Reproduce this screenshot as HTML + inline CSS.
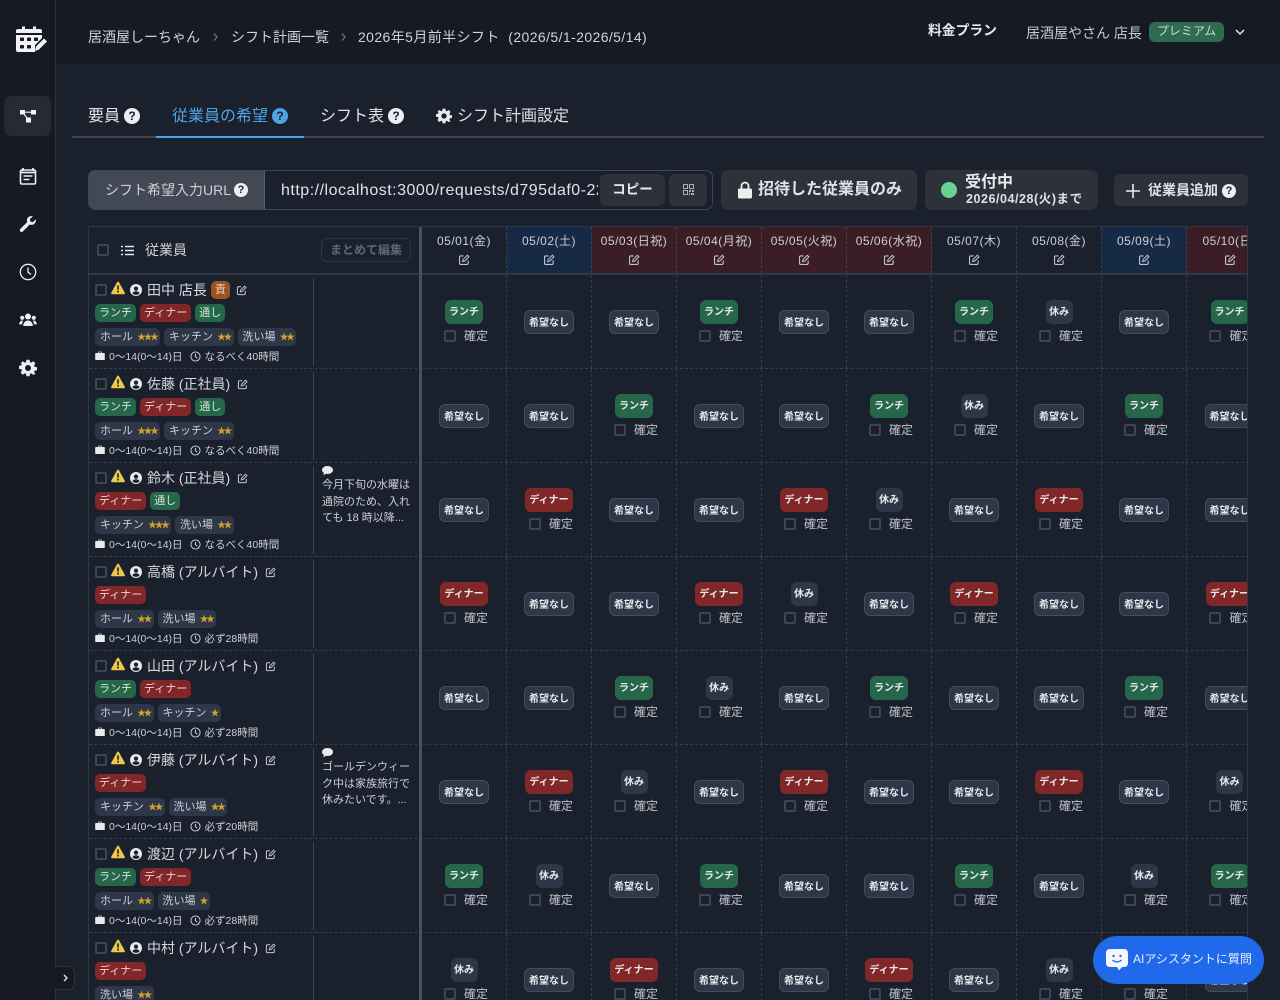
<!DOCTYPE html>
<html lang="ja"><head><meta charset="utf-8"><title>シフト</title>
<style>
*{box-sizing:border-box;margin:0;padding:0}
html,body{width:1280px;height:1000px;overflow:hidden;background:#1a202c}
body{font-family:"Liberation Sans","Noto Sans CJK JP",sans-serif;color:#e2e8f0;position:relative}
.a{position:absolute;white-space:nowrap}
svg{display:block}
.h{display:inline-block;width:16px;height:16px;border-radius:50%;background:#edeef0;color:#1a202c;font-size:12px;font-weight:700;line-height:16px;text-align:center}
.h.s{width:14px;height:14px;font-size:11px;line-height:14px}
#tb{position:absolute;left:88px;top:226px;width:1160px;height:774px;overflow:hidden;border-left:1px solid #2d3748;border-top:1px solid #2d3748;border-right:1px solid #2d3748}
.dh{position:absolute;top:0;width:85px;height:46px;text-align:center;font-size:12px;letter-spacing:.5px;color:#cbd0d8;padding-top:6px;border-right:1px dashed #3a4356;line-height:16px;white-space:nowrap}
.dh svg{margin:5px auto 0}
.sat{background:#172a45}.hol{background:#3b1d25}
.r{position:absolute;left:0;width:1160px;height:94px;border-bottom:1px dashed #343d50}
.n{position:absolute;left:6px;top:7px;height:16px;display:flex;align-items:center;font-size:14px;color:#d5d9df;white-space:nowrap}
.cb{display:inline-block;width:12px;height:12px;border:2px solid #3d4453;border-radius:2px;flex:none}
.t{position:absolute;left:6px;top:29px;display:flex;gap:4px}
.t span,.k span{display:block;height:18px;line-height:18px;border-radius:5px;padding:0 4px;font-size:11px;white-space:nowrap}
.gn{background:#276749;color:#d5e6dc}.rd{background:#822727;color:#eed5d5}
.k{position:absolute;left:6px;top:53px;display:flex;gap:4px}
.k span{background:#2d3748;color:#cbd0d8;padding:0 3.5px 0 5px}
.k i{font-style:normal;color:#d69e2e;font-size:9px;letter-spacing:-2.5px;margin-left:4px;font-family:"Noto Sans CJK JP",sans-serif}
.m{position:absolute;left:6px;top:74px;height:14px;display:flex;align-items:center;font-size:10.5px;color:#cbd0d8;white-space:nowrap}
.v{position:absolute;left:224px;top:3px;width:1px;height:88px;background:#3f4757}
.cm{position:absolute;left:233px;top:3px;width:94px;font-size:11px;line-height:16.5px;color:#cbd0d8}
.cm svg{margin-bottom:1px}
.c{position:absolute;top:0;width:85px;height:93px;padding-top:1px;border-right:1px dashed #343d50;display:flex;flex-direction:column;align-items:center;justify-content:center}
.b{display:block;height:24px;line-height:26px;border-radius:6px;font-size:10px;font-weight:700;text-align:center;white-space:nowrap;color:#e6e9ee}
.L{width:38px;background:#276749}.D{width:48px;background:#822727}.Y{width:27px;background:#2d3748}
.N{width:50px;background:#2d3748;border:1px solid #434c5f;line-height:25px}
.q{display:flex;align-items:center;margin-top:5px;margin-bottom:2px;height:14px;font-size:12px;color:#bfc4cc;margin-left:4px}
.q .cb{margin-right:8px}
.nav{position:absolute;left:19px;width:18px;height:18px}
</style></head><body>
<svg width="0" height="0" style="position:absolute"><defs>
<symbol id="e" viewBox="0 0 14 14"><path d="M6.500 2.200H3.200C2.300 2.200 1.800 2.700 1.800 3.600v7.200c0 .9.5 1.400 1.400 1.400h7.200c.9 0 1.400-.5 1.400-1.400V7.500" fill="none" stroke="currentColor" stroke-width="1.300"/><path d="M5.400 8.800l.5-2.300 5-5 1.800 1.800-5 5z" fill="none" stroke="currentColor" stroke-width="1.200"/></symbol>
<symbol id="w" viewBox="0 0 14 14"><path d="M7 .6c.4 0 .7.2.9.5l5.900 10.600c.4.700-.1 1.500-.9 1.500H1.100c-.8 0-1.300-.8-.9-1.500L6.100 1.100C6.300.8 6.600.6 7 .6z" fill="#ecc94b"/><rect x="6.200" y="4.200" width="1.600" height="4.600" rx=".6" fill="#1a202c"/><circle cx="7" cy="10.600" r="1" fill="#1a202c"/></symbol>
<symbol id="u" viewBox="0 0 12 12"><circle cx="6" cy="6" r="6" fill="#e8eaed"/><circle cx="6" cy="4.600" r="2.100" fill="#1a202c"/><path d="M2.400 9.400c.6-1.500 2-2.100 3.600-2.100s3 .6 3.600 2.100C8.600 10.400 7.400 10.900 6 10.900S3.400 10.400 2.400 9.400z" fill="#1a202c"/></symbol>
<symbol id="bc" viewBox="0 0 10 10"><path d="M3.300 2V1.200c0-.4.2-.6.600-.6h2.200c.4 0 .6.200.6.600V2H9c.5 0 .8.300.8.800v5.400c0 .5-.3.800-.8.800H1c-.5 0-.8-.3-.8-.8V2.800c0-.5.3-.8.800-.8zM4 2h2V1.300H4z" fill="#e8eaed" fill-rule="evenodd"/></symbol>
<symbol id="cl" viewBox="0 0 12 12"><circle cx="6" cy="6" r="5" fill="none" stroke="#d5d9df" stroke-width="1"/><path d="M6 3v3.200l2 1.800" fill="none" stroke="#d5d9df" stroke-width="1"/></symbol>
<symbol id="g" viewBox="0 0 24 24"><path fill="currentColor" fill-rule="evenodd" d="M10 1h4l.6 3.100 1.700.7L19 3l2.900 2.900-1.800 2.700.7 1.700 3.200.7v4l-3.200.6-.7 1.700 1.800 2.700L19 21l-2.700-1.800-1.700.7L14 23h-4l-.6-3.100-1.700-.7L5 21l-2.900-2.900 1.800-2.700-.7-1.700L0 13.100v-4l3.200-.7.700-1.700L2.100 5.900 5 3l2.700 1.800 1.700-.7zM12 8a4 4 0 1 0 0 8 4 4 0 0 0 0-8z"/></symbol>
</defs></svg>

<!-- sidebar -->
<div class="a" style="left:0;top:0;width:56px;height:1000px;background:#171a23;border-right:1px solid #2d3342"></div>
<svg class="a" style="left:15px;top:25px" width="33" height="29" viewBox="0 0 33 29"><path d="M1 8V6c0-1.200.8-2 2-2h4V1.500h3V4h8V1.500h3V4h4c1.200 0 2 .8 2 2v2z" fill="#f2f3f4"/><path d="M1 10h26v3l-7 7v7H3c-1.200 0-2-.8-2-2z" fill="#f2f3f4"/><g fill="#171a23"><rect x="5" y="12.500" width="4" height="3.500" rx=".8"/><rect x="12" y="12.500" width="4" height="3.500" rx=".8"/><rect x="19" y="12.500" width="4" height="3.500" rx=".8"/><rect x="5" y="20" width="4" height="3.500" rx=".8"/><rect x="12" y="20" width="4" height="3.500" rx=".8"/></g><path d="M20 26l1-4.500L29 13.500l3 3-8 8z" fill="#f2f3f4"/></svg>
<div class="a" style="left:4px;top:96px;width:47px;height:40px;border-radius:7px;background:#262a33"></div>
<svg class="a" style="left:20px;top:109px" width="16" height="14" viewBox="0 0 16 14"><g fill="#f2f3f4"><rect x="0" y="1" width="5" height="4.500"/><rect x="11" y="1" width="5" height="4.500"/><rect x="6" y="8.500" width="5" height="5"/></g><path d="M4 3.200h8M3.500 4.500L8 10" stroke="#f2f3f4" stroke-width="1.200"/></svg>
<svg class="nav" style="top:167px" viewBox="0 0 18 18"><path d="M3 3h12c1 0 1.500.5 1.500 1.500v11c0 1-.5 1.500-1.500 1.500H3c-1 0-1.500-.5-1.500-1.500v-11C1.500 3.500 2 3 3 3z" fill="none" stroke="#eceef0" stroke-width="1.600"/><path d="M4 1v3M14 1v3M1.500 5.500h15" stroke="#eceef0" stroke-width="1.800"/><path d="M4.500 9h9M4.500 12.500h6" stroke="#eceef0" stroke-width="1.600"/></svg>
<svg class="nav" style="top:215px" viewBox="0 0 18 18"><path d="M16.800 4.200l-3 3-2.400-.6-.6-2.400 3-3C11.500.8 9 1.600 8.200 3.800c-.4 1.100-.3 2.200.1 3.200L1.400 13.900c-.8.800-.8 1.900-.1 2.600s1.900.7 2.600-.1L10.800 9.500c1 .4 2.100.5 3.200.1 2.200-.8 3.200-3.200 2.800-5.400z" fill="#eceef0"/></svg>
<svg class="nav" style="top:263px" viewBox="0 0 18 18"><circle cx="9" cy="9" r="7.700" fill="none" stroke="#eceef0" stroke-width="1.300"/><path d="M9 4.500V9.200l3 2.300" fill="none" stroke="#eceef0" stroke-width="1.300"/></svg>
<svg class="nav" style="top:311px" viewBox="0 0 18 18"><g fill="#eceef0"><circle cx="9" cy="5.500" r="3"/><circle cx="3.200" cy="6.800" r="2.100"/><circle cx="14.800" cy="6.800" r="2.100"/><path d="M4.200 15c0-3.300 2.100-5.500 4.800-5.500s4.800 2.200 4.800 5.500z"/><path d="M.2 13.400c0-2.300 1.300-3.900 3.200-3.900.5 0 .8.100.8.100-.6.900-1 2.100-1.100 3.800zM17.800 13.400c0-2.300-1.300-3.900-3.200-3.900-.5 0-.8.100-.8.100.6.900 1 2.100 1.100 3.800z"/></g></svg>
<svg class="nav" style="top:359px;color:#eceef0" viewBox="0 0 24 24"><use href="#g"/></svg>
<div class="a" style="left:55px;top:966px;width:20px;height:24px;background:#171a23;border:1px solid #2d3342;border-left:0;border-radius:0 6px 6px 0"></div>
<svg class="a" style="left:62px;top:974px" width="7" height="8" viewBox="0 0 7 8"><path d="M2 1l3 3-3 3" fill="none" stroke="#e2e8f0" stroke-width="1.400"/></svg>

<!-- header -->
<div class="a" style="left:56px;top:0;width:1224px;height:64px;background:#171a23"></div>
<div class="a" style="left:88px;top:28px;font-size:14px;line-height:18px;color:#cfd3d9">居酒屋しーちゃん</div>
<svg class="a" style="left:213px;top:33px" width="5" height="8" viewBox="0 0 5 8"><path d="M1 .5l3 3.500-3 3.500" fill="none" stroke="#737a87" stroke-width="1.100"/></svg>
<div class="a" style="left:231px;top:28px;font-size:14px;line-height:18px;color:#cfd3d9">シフト計画一覧</div>
<svg class="a" style="left:341px;top:33px" width="5" height="8" viewBox="0 0 5 8"><path d="M1 .5l3 3.500-3 3.500" fill="none" stroke="#737a87" stroke-width="1.100"/></svg>
<div class="a" style="left:358px;top:28px;font-size:14px;line-height:18px;color:#cfd3d9;letter-spacing:.4px">2026年5月前半シフト&nbsp; (2026/5/1-2026/5/14)</div>
<div class="a" style="left:928px;top:22px;font-size:13.800px;line-height:18px;font-weight:700;color:#e8eaed">料金プラン</div>
<div class="a" style="left:1026px;top:24px;font-size:14px;line-height:18px;color:#c5c9d0">居酒屋やさん 店長</div>
<div class="a" style="left:1149px;top:22px;width:75px;height:20px;border-radius:6px;background:#2f6b4f;font-size:12px;line-height:19px;text-align:center;color:#c6dccf">プレミアム</div>
<svg class="a" style="left:1235px;top:29px" width="10" height="7" viewBox="0 0 10 7"><path d="M1 1l4 4 4-4" fill="none" stroke="#e2e8f0" stroke-width="1.500"/></svg>

<!-- tabs -->
<div class="a" style="left:72px;top:136px;width:1192px;height:2px;background:#3f444e"></div>
<div class="a" style="left:156px;top:136px;width:148px;height:2px;background:#4fa3e3"></div>
<div class="a" style="left:88px;top:106px;font-size:16px;line-height:22px;color:#dfe2e6">要員</div>
<span class="h a" style="left:124px;top:108px">?</span>
<div class="a" style="left:172px;top:106px;font-size:16px;line-height:22px;color:#4fa3e3">従業員の希望</div>
<span class="h a" style="left:272px;top:108px;background:#4fa3e3">?</span>
<div class="a" style="left:320px;top:106px;font-size:16px;line-height:22px;color:#dfe2e6">シフト表</div>
<span class="h a" style="left:388px;top:108px">?</span>
<svg class="a" style="left:436px;top:108px;color:#e8eaed" width="16" height="16" viewBox="0 0 24 24"><use href="#g"/></svg>
<div class="a" style="left:457px;top:106px;font-size:16px;line-height:22px;color:#dfe2e6">シフト計画設定</div>

<!-- toolbar -->
<div class="a" style="left:88px;top:170px;width:625px;height:40px;border:1px solid #3f4552;border-radius:7px;overflow:hidden;background:#1a202c">
<div class="a" style="left:0;top:0;width:176px;height:38px;background:#424854;border-right:1px solid #5a606c"></div>
<div class="a" style="left:16px;top:10px;font-size:14px;line-height:18px;color:#cfd3d9">シフト希望入力URL</div>
<span class="h s a" style="left:145px;top:12px">?</span>
<div class="a" style="left:192px;top:10px;width:317px;overflow:hidden;font-size:16px;line-height:20px;color:#dfe2e6;letter-spacing:.5px">http://localhost:3000/requests/d795daf0-22c4-4f</div>
<div class="a" style="left:511px;top:3px;width:65px;height:32px;background:#2d3139;border-radius:6px;font-size:13.500px;font-weight:700;line-height:32px;text-align:center;color:#e8eaed">コピー</div>
<div class="a" style="left:580px;top:3px;width:38px;height:32px;background:#2d3139;border-radius:6px"></div>
<svg class="a" style="left:594px;top:13px" width="11" height="11" viewBox="0 0 11 11"><g fill="none" stroke="#a8adb6" stroke-width="1"><rect x=".5" y=".5" width="4" height="4"/><rect x="6.500" y=".5" width="4" height="4"/><rect x=".5" y="6.500" width="4" height="4"/></g><path d="M6 6h2v2H6zM9 6h2v2H9zM8 9h3v2H8zM6 9h1v2H6z" fill="#a8adb6"/></svg>
</div>
<div class="a" style="left:721px;top:170px;width:196px;height:40px;background:#2d3139;border-radius:7px"></div>
<svg class="a" style="left:738px;top:181px" width="14" height="18" viewBox="0 0 14 18"><path d="M3.500 8V5a3.500 3.500 0 0 1 7 0v3" fill="none" stroke="#eceef0" stroke-width="1.800"/><rect x="0" y="7.500" width="14" height="10" rx="1.500" fill="#eceef0"/></svg>
<div class="a" style="left:758px;top:180px;font-size:16px;line-height:20px;font-weight:700;color:#dfe2e6">招待した従業員のみ</div>
<div class="a" style="left:925px;top:170px;width:173px;height:40px;background:#2d3139;border-radius:7px"></div>
<div class="a" style="left:941px;top:182px;width:16px;height:16px;border-radius:50%;background:#68d391"></div>
<div class="a" style="left:965px;top:173px;font-size:16px;line-height:20px;font-weight:700;color:#e8eaed">受付中</div>
<div class="a" style="left:966px;top:192px;font-size:12.500px;line-height:15px;font-weight:700;letter-spacing:.55px;color:#dfe2e6">2026/04/28(火)まで</div>
<div class="a" style="left:1114px;top:174px;width:134px;height:32px;background:#2d3139;border-radius:6px"></div>
<svg class="a" style="left:1126px;top:184px" width="14" height="14" viewBox="0 0 14 14"><path d="M7 0v14M0 7h14" stroke="#eceef0" stroke-width="1.600"/></svg>
<div class="a" style="left:1148px;top:181px;font-size:14px;line-height:18px;font-weight:700;color:#dfe2e6">従業員追加</div>
<span class="h s a" style="left:1222px;top:184px">?</span>

<!-- table -->
<div id="tb">
<div class="a" style="left:0;top:46px;width:1160px;height:2px;background:#2d3748"></div>
<span class="cb a" style="left:8px;top:17px"></span>
<svg class="a" style="left:32px;top:18px" width="13" height="11" viewBox="0 0 13 11"><path d="M4 1.500h9M4 5.500h9M4 9.500h9" stroke="#e2e8f0" stroke-width="1.500"/><path d="M0 .7h2v1.600H0zM0 4.700h2v1.600H0zM0 8.700h2v1.600H0z" fill="#e2e8f0"/></svg>
<div class="a" style="left:56px;top:14px;font-size:14px;line-height:19px;color:#cfd3d9">従業員</div>
<div class="a" style="left:232px;top:11px;width:90px;height:24px;border:1px solid #2d3342;border-radius:6px;font-size:12px;font-weight:700;line-height:22px;text-align:center;color:#5f6571">まとめて編集</div>

<div class="dh" style="left:333px">05/01(金)<svg width="12" height="12" style="color:#bfc4cc"><use href="#e"/></svg></div>
<div class="dh sat" style="left:418px">05/02(土)<svg width="12" height="12" style="color:#bfc4cc"><use href="#e"/></svg></div>
<div class="dh hol" style="left:503px">05/03(日祝)<svg width="12" height="12" style="color:#bfc4cc"><use href="#e"/></svg></div>
<div class="dh hol" style="left:588px">05/04(月祝)<svg width="12" height="12" style="color:#bfc4cc"><use href="#e"/></svg></div>
<div class="dh hol" style="left:673px">05/05(火祝)<svg width="12" height="12" style="color:#bfc4cc"><use href="#e"/></svg></div>
<div class="dh hol" style="left:758px">05/06(水祝)<svg width="12" height="12" style="color:#bfc4cc"><use href="#e"/></svg></div>
<div class="dh" style="left:843px">05/07(木)<svg width="12" height="12" style="color:#bfc4cc"><use href="#e"/></svg></div>
<div class="dh" style="left:928px">05/08(金)<svg width="12" height="12" style="color:#bfc4cc"><use href="#e"/></svg></div>
<div class="dh sat" style="left:1013px">05/09(土)<svg width="12" height="12" style="color:#bfc4cc"><use href="#e"/></svg></div>
<div class="dh hol" style="left:1098px;border-right:0;width:85px">05/10(日)<svg width="12" height="12" style="color:#bfc4cc"><use href="#e"/></svg></div>

<div class="r" style="top:48px"><div class="n"><span class="cb"></span><svg width="14" height="14" style="margin:-4px 0 0 4px"><use href="#w"/></svg><svg width="12" height="12" style="margin:0 5px 0 5px"><use href="#u"/></svg>田中 店長<span style="width:19px;height:18px;border-radius:5px;background:#9c5221;font-size:11px;line-height:18px;text-align:center;margin-left:4px;color:#e8cdb8">責</span><svg width="11" height="11" style="margin-left:6.5px;color:#c5c9d0"><use href="#e"/></svg></div>
<div class="t"><span class="gn">ランチ</span><span class="rd">ディナー</span><span class="gn">通し</span></div>
<div class="k"><span>ホール<i>★★★</i></span><span>キッチン<i>★★</i></span><span>洗い場<i>★★</i></span></div>
<div class="m"><svg width="10" height="10"><use href="#bc"/></svg><span style="margin:0 7px 0 4px">0〜14(0〜14)日</span><svg width="11" height="11"><use href="#cl"/></svg><span style="margin-left:4px">なるべく40時間</span></div><div class="v"></div>
<div class="c" style="left:333px"><b class="b L">ランチ</b><div class="q"><span class="cb"></span>確定</div></div>
<div class="c" style="left:418px"><b class="b N">希望なし</b></div>
<div class="c" style="left:503px"><b class="b N">希望なし</b></div>
<div class="c" style="left:588px"><b class="b L">ランチ</b><div class="q"><span class="cb"></span>確定</div></div>
<div class="c" style="left:673px"><b class="b N">希望なし</b></div>
<div class="c" style="left:758px"><b class="b N">希望なし</b></div>
<div class="c" style="left:843px"><b class="b L">ランチ</b><div class="q"><span class="cb"></span>確定</div></div>
<div class="c" style="left:928px"><b class="b Y">休み</b><div class="q"><span class="cb"></span>確定</div></div>
<div class="c" style="left:1013px"><b class="b N">希望なし</b></div>
<div class="c" style="left:1098px;border:0"><b class="b L">ランチ</b><div class="q"><span class="cb"></span>確定</div></div></div>

<div class="r" style="top:142px"><div class="n"><span class="cb"></span><svg width="14" height="14" style="margin:-4px 0 0 4px"><use href="#w"/></svg><svg width="12" height="12" style="margin:0 5px 0 5px"><use href="#u"/></svg>佐藤 (正社員)<svg width="11" height="11" style="margin-left:6.5px;color:#c5c9d0"><use href="#e"/></svg></div>
<div class="t"><span class="gn">ランチ</span><span class="rd">ディナー</span><span class="gn">通し</span></div>
<div class="k"><span>ホール<i>★★★</i></span><span>キッチン<i>★★</i></span></div>
<div class="m"><svg width="10" height="10"><use href="#bc"/></svg><span style="margin:0 7px 0 4px">0〜14(0〜14)日</span><svg width="11" height="11"><use href="#cl"/></svg><span style="margin-left:4px">なるべく40時間</span></div><div class="v"></div>
<div class="c" style="left:333px"><b class="b N">希望なし</b></div>
<div class="c" style="left:418px"><b class="b N">希望なし</b></div>
<div class="c" style="left:503px"><b class="b L">ランチ</b><div class="q"><span class="cb"></span>確定</div></div>
<div class="c" style="left:588px"><b class="b N">希望なし</b></div>
<div class="c" style="left:673px"><b class="b N">希望なし</b></div>
<div class="c" style="left:758px"><b class="b L">ランチ</b><div class="q"><span class="cb"></span>確定</div></div>
<div class="c" style="left:843px"><b class="b Y">休み</b><div class="q"><span class="cb"></span>確定</div></div>
<div class="c" style="left:928px"><b class="b N">希望なし</b></div>
<div class="c" style="left:1013px"><b class="b L">ランチ</b><div class="q"><span class="cb"></span>確定</div></div>
<div class="c" style="left:1098px;border:0"><b class="b N">希望なし</b></div></div>

<div class="r" style="top:236px"><div class="n"><span class="cb"></span><svg width="14" height="14" style="margin:-4px 0 0 4px"><use href="#w"/></svg><svg width="12" height="12" style="margin:0 5px 0 5px"><use href="#u"/></svg>鈴木 (正社員)<svg width="11" height="11" style="margin-left:6.5px;color:#c5c9d0"><use href="#e"/></svg></div>
<div class="t"><span class="rd">ディナー</span><span class="gn">通し</span></div>
<div class="k"><span>キッチン<i>★★★</i></span><span>洗い場<i>★★</i></span></div>
<div class="m"><svg width="10" height="10"><use href="#bc"/></svg><span style="margin:0 7px 0 4px">0〜14(0〜14)日</span><svg width="11" height="11"><use href="#cl"/></svg><span style="margin-left:4px">なるべく40時間</span></div><div class="v"></div>
<div class="cm"><svg width="11" height="10" viewBox="0 0 11 10"><path d="M5.500 0C8.500 0 11 1.700 11 4s-2.500 4-5.500 4c-.6 0-1.200-.1-1.700-.2L1.500 9.500l.4-2.600C.7 6.200 0 5.200 0 4 0 1.700 2.500 0 5.500 0z" fill="#e8eaed"/></svg>今月下旬の水曜は<br>通院のため、入れ<br>ても 18 時以降...</div>
<div class="c" style="left:333px"><b class="b N">希望なし</b></div>
<div class="c" style="left:418px"><b class="b D">ディナー</b><div class="q"><span class="cb"></span>確定</div></div>
<div class="c" style="left:503px"><b class="b N">希望なし</b></div>
<div class="c" style="left:588px"><b class="b N">希望なし</b></div>
<div class="c" style="left:673px"><b class="b D">ディナー</b><div class="q"><span class="cb"></span>確定</div></div>
<div class="c" style="left:758px"><b class="b Y">休み</b><div class="q"><span class="cb"></span>確定</div></div>
<div class="c" style="left:843px"><b class="b N">希望なし</b></div>
<div class="c" style="left:928px"><b class="b D">ディナー</b><div class="q"><span class="cb"></span>確定</div></div>
<div class="c" style="left:1013px"><b class="b N">希望なし</b></div>
<div class="c" style="left:1098px;border:0"><b class="b N">希望なし</b></div></div>

<div class="r" style="top:330px"><div class="n"><span class="cb"></span><svg width="14" height="14" style="margin:-4px 0 0 4px"><use href="#w"/></svg><svg width="12" height="12" style="margin:0 5px 0 5px"><use href="#u"/></svg>高橋 (アルバイト)<svg width="11" height="11" style="margin-left:6.5px;color:#c5c9d0"><use href="#e"/></svg></div>
<div class="t"><span class="rd">ディナー</span></div>
<div class="k"><span>ホール<i>★★</i></span><span>洗い場<i>★★</i></span></div>
<div class="m"><svg width="10" height="10"><use href="#bc"/></svg><span style="margin:0 7px 0 4px">0〜14(0〜14)日</span><svg width="11" height="11"><use href="#cl"/></svg><span style="margin-left:4px">必ず28時間</span></div><div class="v"></div>
<div class="c" style="left:333px"><b class="b D">ディナー</b><div class="q"><span class="cb"></span>確定</div></div>
<div class="c" style="left:418px"><b class="b N">希望なし</b></div>
<div class="c" style="left:503px"><b class="b N">希望なし</b></div>
<div class="c" style="left:588px"><b class="b D">ディナー</b><div class="q"><span class="cb"></span>確定</div></div>
<div class="c" style="left:673px"><b class="b Y">休み</b><div class="q"><span class="cb"></span>確定</div></div>
<div class="c" style="left:758px"><b class="b N">希望なし</b></div>
<div class="c" style="left:843px"><b class="b D">ディナー</b><div class="q"><span class="cb"></span>確定</div></div>
<div class="c" style="left:928px"><b class="b N">希望なし</b></div>
<div class="c" style="left:1013px"><b class="b N">希望なし</b></div>
<div class="c" style="left:1098px;border:0"><b class="b D">ディナー</b><div class="q"><span class="cb"></span>確定</div></div></div>

<div class="r" style="top:424px"><div class="n"><span class="cb"></span><svg width="14" height="14" style="margin:-4px 0 0 4px"><use href="#w"/></svg><svg width="12" height="12" style="margin:0 5px 0 5px"><use href="#u"/></svg>山田 (アルバイト)<svg width="11" height="11" style="margin-left:6.5px;color:#c5c9d0"><use href="#e"/></svg></div>
<div class="t"><span class="gn">ランチ</span><span class="rd">ディナー</span></div>
<div class="k"><span>ホール<i>★★</i></span><span>キッチン<i>★</i></span></div>
<div class="m"><svg width="10" height="10"><use href="#bc"/></svg><span style="margin:0 7px 0 4px">0〜14(0〜14)日</span><svg width="11" height="11"><use href="#cl"/></svg><span style="margin-left:4px">必ず28時間</span></div><div class="v"></div>
<div class="c" style="left:333px"><b class="b N">希望なし</b></div>
<div class="c" style="left:418px"><b class="b N">希望なし</b></div>
<div class="c" style="left:503px"><b class="b L">ランチ</b><div class="q"><span class="cb"></span>確定</div></div>
<div class="c" style="left:588px"><b class="b Y">休み</b><div class="q"><span class="cb"></span>確定</div></div>
<div class="c" style="left:673px"><b class="b N">希望なし</b></div>
<div class="c" style="left:758px"><b class="b L">ランチ</b><div class="q"><span class="cb"></span>確定</div></div>
<div class="c" style="left:843px"><b class="b N">希望なし</b></div>
<div class="c" style="left:928px"><b class="b N">希望なし</b></div>
<div class="c" style="left:1013px"><b class="b L">ランチ</b><div class="q"><span class="cb"></span>確定</div></div>
<div class="c" style="left:1098px;border:0"><b class="b N">希望なし</b></div></div>

<div class="r" style="top:518px"><div class="n"><span class="cb"></span><svg width="14" height="14" style="margin:-4px 0 0 4px"><use href="#w"/></svg><svg width="12" height="12" style="margin:0 5px 0 5px"><use href="#u"/></svg>伊藤 (アルバイト)<svg width="11" height="11" style="margin-left:6.5px;color:#c5c9d0"><use href="#e"/></svg></div>
<div class="t"><span class="rd">ディナー</span></div>
<div class="k"><span>キッチン<i>★★</i></span><span>洗い場<i>★★</i></span></div>
<div class="m"><svg width="10" height="10"><use href="#bc"/></svg><span style="margin:0 7px 0 4px">0〜14(0〜14)日</span><svg width="11" height="11"><use href="#cl"/></svg><span style="margin-left:4px">必ず20時間</span></div><div class="v"></div>
<div class="cm"><svg width="11" height="10" viewBox="0 0 11 10"><path d="M5.500 0C8.500 0 11 1.700 11 4s-2.500 4-5.500 4c-.6 0-1.200-.1-1.700-.2L1.500 9.500l.4-2.600C.7 6.200 0 5.200 0 4 0 1.700 2.500 0 5.500 0z" fill="#e8eaed"/></svg>ゴールデンウィー<br>ク中は家族旅行で<br>休みたいです。...</div>
<div class="c" style="left:333px"><b class="b N">希望なし</b></div>
<div class="c" style="left:418px"><b class="b D">ディナー</b><div class="q"><span class="cb"></span>確定</div></div>
<div class="c" style="left:503px"><b class="b Y">休み</b><div class="q"><span class="cb"></span>確定</div></div>
<div class="c" style="left:588px"><b class="b N">希望なし</b></div>
<div class="c" style="left:673px"><b class="b D">ディナー</b><div class="q"><span class="cb"></span>確定</div></div>
<div class="c" style="left:758px"><b class="b N">希望なし</b></div>
<div class="c" style="left:843px"><b class="b N">希望なし</b></div>
<div class="c" style="left:928px"><b class="b D">ディナー</b><div class="q"><span class="cb"></span>確定</div></div>
<div class="c" style="left:1013px"><b class="b N">希望なし</b></div>
<div class="c" style="left:1098px;border:0"><b class="b Y">休み</b><div class="q"><span class="cb"></span>確定</div></div></div>

<div class="r" style="top:612px"><div class="n"><span class="cb"></span><svg width="14" height="14" style="margin:-4px 0 0 4px"><use href="#w"/></svg><svg width="12" height="12" style="margin:0 5px 0 5px"><use href="#u"/></svg>渡辺 (アルバイト)<svg width="11" height="11" style="margin-left:6.5px;color:#c5c9d0"><use href="#e"/></svg></div>
<div class="t"><span class="gn">ランチ</span><span class="rd">ディナー</span></div>
<div class="k"><span>ホール<i>★★</i></span><span>洗い場<i>★</i></span></div>
<div class="m"><svg width="10" height="10"><use href="#bc"/></svg><span style="margin:0 7px 0 4px">0〜14(0〜14)日</span><svg width="11" height="11"><use href="#cl"/></svg><span style="margin-left:4px">必ず28時間</span></div><div class="v"></div>
<div class="c" style="left:333px"><b class="b L">ランチ</b><div class="q"><span class="cb"></span>確定</div></div>
<div class="c" style="left:418px"><b class="b Y">休み</b><div class="q"><span class="cb"></span>確定</div></div>
<div class="c" style="left:503px"><b class="b N">希望なし</b></div>
<div class="c" style="left:588px"><b class="b L">ランチ</b><div class="q"><span class="cb"></span>確定</div></div>
<div class="c" style="left:673px"><b class="b N">希望なし</b></div>
<div class="c" style="left:758px"><b class="b N">希望なし</b></div>
<div class="c" style="left:843px"><b class="b L">ランチ</b><div class="q"><span class="cb"></span>確定</div></div>
<div class="c" style="left:928px"><b class="b N">希望なし</b></div>
<div class="c" style="left:1013px"><b class="b Y">休み</b><div class="q"><span class="cb"></span>確定</div></div>
<div class="c" style="left:1098px;border:0"><b class="b L">ランチ</b><div class="q"><span class="cb"></span>確定</div></div></div>

<div class="r" style="top:706px"><div class="n"><span class="cb"></span><svg width="14" height="14" style="margin:-4px 0 0 4px"><use href="#w"/></svg><svg width="12" height="12" style="margin:0 5px 0 5px"><use href="#u"/></svg>中村 (アルバイト)<svg width="11" height="11" style="margin-left:6.5px;color:#c5c9d0"><use href="#e"/></svg></div>
<div class="t"><span class="rd">ディナー</span></div>
<div class="k"><span>洗い場<i>★★</i></span></div>
<div class="v"></div>
<div class="c" style="left:333px"><b class="b Y">休み</b><div class="q"><span class="cb"></span>確定</div></div>
<div class="c" style="left:418px"><b class="b N">希望なし</b></div>
<div class="c" style="left:503px"><b class="b D">ディナー</b><div class="q"><span class="cb"></span>確定</div></div>
<div class="c" style="left:588px"><b class="b N">希望なし</b></div>
<div class="c" style="left:673px"><b class="b N">希望なし</b></div>
<div class="c" style="left:758px"><b class="b D">ディナー</b><div class="q"><span class="cb"></span>確定</div></div>
<div class="c" style="left:843px"><b class="b N">希望なし</b></div>
<div class="c" style="left:928px"><b class="b Y">休み</b><div class="q"><span class="cb"></span>確定</div></div>
<div class="c" style="left:1013px"><b class="b D">ディナー</b><div class="q"><span class="cb"></span>確定</div></div>
<div class="c" style="left:1098px;border:0"><b class="b N">希望なし</b></div></div>

<div class="a" style="left:330px;top:0;width:3px;height:774px;background:#4a505c"></div>
</div>

<!-- AI button -->
<div class="a" style="left:1093px;top:936px;width:171px;height:48px;border-radius:24px;background:#2169eb"></div>
<svg class="a" style="left:1106px;top:949px" width="22" height="22" viewBox="0 0 22 22"><path d="M4 0h14c2.500 0 4 1.500 4 4v10c0 2.500-1.500 4-4 4h-2l-3 3.500-2-3.500H4c-2.500 0-4-1.500-4-4V4c0-2.500 1.500-4 4-4z" fill="#f4f7fd"/><circle cx="7.500" cy="7" r="1.200" fill="#2169eb"/><circle cx="14.500" cy="7" r="1.200" fill="#2169eb"/><path d="M6.500 11c2.500 2.500 6.500 2.500 9 0" fill="none" stroke="#2169eb" stroke-width="1.300"/></svg>
<div class="a" style="left:1133px;top:951px;font-size:12px;line-height:17px;color:#e8effc">AIアシスタントに質問</div>
</body></html>
